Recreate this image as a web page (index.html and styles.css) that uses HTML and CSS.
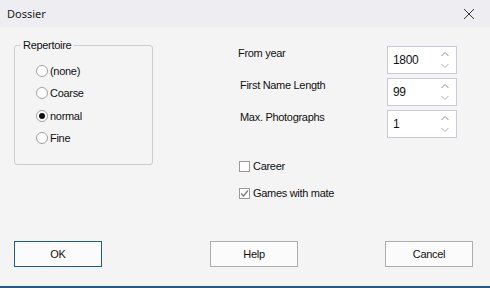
FILE: index.html
```html
<!DOCTYPE html>
<html lang="en">
<head>
    <meta charset="UTF-8">
    <meta name="viewport" content="width=device-width, initial-scale=1.0">
    <title>Dossier</title>
    <link rel="stylesheet" href="styles.css">
</head>
<body>
    <div class="dialog">
        <div class="titlebar">
            <span class="title">Dossier</span>
            <svg class="close" width="12" height="12" viewBox="0 0 12 12">
                <path d="M1 1 L11 11 M11 1 L1 11" stroke="#333" stroke-width="1" fill="none"/>
            </svg>
        </div>

        <div class="content">
            <fieldset class="group">
                <legend>Repertoire</legend>
                <label class="radio"><span class="dot"></span>(none)</label>
                <label class="radio"><span class="dot"></span>Coarse</label>
                <label class="radio"><span class="dot checked"></span>normal</label>
                <label class="radio"><span class="dot"></span>Fine</label>
            </fieldset>

            <div class="settings">
                <div class="spin-rows">
                    <div class="field-label">From year</div>
                    <div class="spin">
                        <span class="value">1800</span>
                        <span class="arrows">
                            <svg width="8" height="5" viewBox="0 0 8 5"><path d="M0.5 4 L4 0.5 L7.5 4" stroke="#8a8a8a" fill="none"/></svg>
                            <svg width="8" height="5" viewBox="0 0 8 5"><path d="M0.5 1 L4 4.5 L7.5 1" stroke="#b0b0b0" fill="none"/></svg>
                        </span>
                    </div>

                    <div class="field-label indent">First Name Length</div>
                    <div class="spin">
                        <span class="value">99</span>
                        <span class="arrows">
                            <svg width="8" height="5" viewBox="0 0 8 5"><path d="M0.5 4 L4 0.5 L7.5 4" stroke="#8a8a8a" fill="none"/></svg>
                            <svg width="8" height="5" viewBox="0 0 8 5"><path d="M0.5 1 L4 4.5 L7.5 1" stroke="#b0b0b0" fill="none"/></svg>
                        </span>
                    </div>

                    <div class="field-label indent">Max. Photographs</div>
                    <div class="spin">
                        <span class="value">1</span>
                        <span class="arrows">
                            <svg width="8" height="5" viewBox="0 0 8 5"><path d="M0.5 4 L4 0.5 L7.5 4" stroke="#8a8a8a" fill="none"/></svg>
                            <svg width="8" height="5" viewBox="0 0 8 5"><path d="M0.5 1 L4 4.5 L7.5 1" stroke="#b0b0b0" fill="none"/></svg>
                        </span>
                    </div>
                </div>

                <div class="checks">
                    <label class="check"><span class="box"></span>Career</label>
                    <label class="check">
                        <span class="box">
                            <svg width="11" height="11" viewBox="0 0 11 11"><path d="M2 5.5 L4.5 8 L9 2.5" stroke="#777" stroke-width="1.2" fill="none"/></svg>
                        </span>Games with mate
                    </label>
                </div>
            </div>
        </div>

        <div class="buttons">
            <button class="btn default">OK</button>
            <button class="btn help">Help</button>
            <button class="btn cancel">Cancel</button>
        </div>
    </div>
</body>
</html>
```

FILE: styles.css
```css
* {
    box-sizing: border-box;
    margin: 0;
    padding: 0;
}

body {
    width: 490px;
    height: 288px;
    overflow: hidden;
    background: #f4f4f4;
    font-family: 'Liberation Sans', Arial, sans-serif;
    font-size: 11px;
    letter-spacing: -0.3px;
    color: #111;
}

.dialog {
    height: 288px;
    display: flex;
    flex-direction: column;
    border-bottom: 2px solid #1b5d8f;
}

.titlebar {
    height: 27px;
    flex: none;
    background: #eeeef2;
    display: flex;
    align-items: center;
    padding-left: 7px;
    padding-right: 15px;
}

.title {
    font-family: 'Noto Sans', 'Open Sans', sans-serif;
    font-size: 11px;
    letter-spacing: 0;
    color: #1a1a1a;
}

.close {
    margin-left: auto;
}

.content {
    display: flex;
    padding: 12px 0 0 14px;
}

.group {
    width: 139px;
    height: 126px;
    border: 1px solid #cdcdcd;
    border-radius: 3px;
    padding: 9px 0 0 21px;
}

.group legend {
    padding: 0 3px;
    margin-left: -16px;
}

.radio {
    display: flex;
    align-items: center;
    height: 22.3px;
    gap: 2px;
}

.dot {
    width: 12px;
    height: 12px;
    border: 1px solid #a0a0a0;
    border-radius: 50%;
    background: #fff;
    display: flex;
    align-items: center;
    justify-content: center;
}

.dot.checked::after {
    content: '';
    width: 6px;
    height: 6px;
    border-radius: 50%;
    background: #111;
}

.settings {
    margin-left: 85px;
    padding-top: 7px;
}

.spin-rows {
    display: grid;
    grid-template-columns: 149px 70px;
    grid-auto-rows: 28px;
    row-gap: 4px;
}

.field-label {
    padding-top: 1px;
}

.field-label.indent {
    padding-left: 2px;
}

.spin {
    background: #fff;
    border: 1px solid #c9c9d6;
    display: flex;
    align-items: center;
    padding-left: 5px;
    padding-right: 7px;
}

.value {
    font-size: 12px;
}

.arrows {
    margin-left: auto;
    display: flex;
    flex-direction: column;
    gap: 6px;
}

.checks {
    margin-top: 19px;
    display: flex;
    flex-direction: column;
    gap: 9px;
}

.check {
    display: flex;
    align-items: center;
    height: 18px;
    gap: 3px;
    padding-left: 1px;
}

.box {
    width: 11px;
    height: 11px;
    border: 1px solid #9a9a9a;
    background: #fff;
    display: flex;
    align-items: center;
    justify-content: center;
}

.box svg {
    flex: none;
}

.buttons {
    margin-top: auto;
    display: flex;
    padding: 0 0 19px 14px;
}

.btn {
    width: 88px;
    height: 26px;
    background: #fbfbfb;
    border: 1px solid #adadad;
    font-family: 'Liberation Sans', Arial, sans-serif;
    font-size: 11px;
    letter-spacing: -0.3px;
    color: #111;
}

.btn.default {
    border-color: #1b5d8f;
}

.btn.help {
    margin-left: 108px;
}

.btn.cancel {
    margin-left: 87px;
}
```
